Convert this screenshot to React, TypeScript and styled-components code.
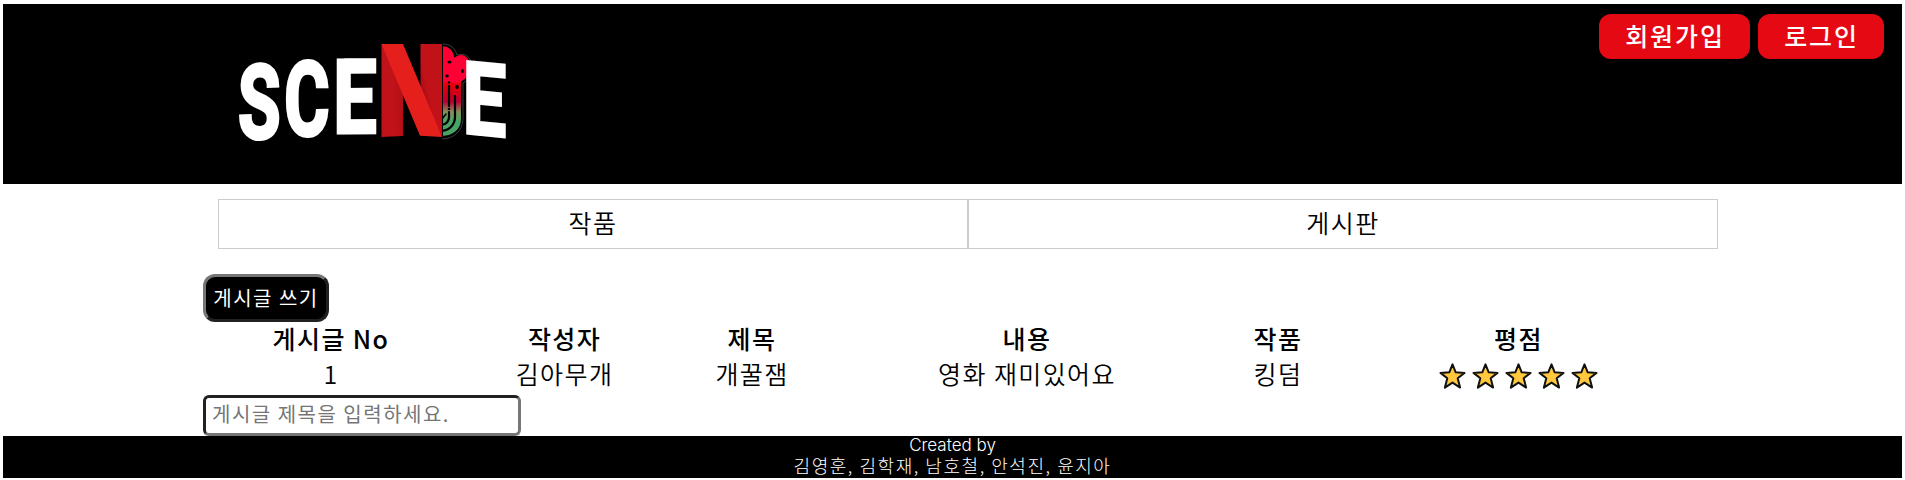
import React from "react";
import styled, { createGlobalStyle } from "styled-components";

const GlobalStyle = createGlobalStyle`
  * { box-sizing: border-box; }
  body {
    margin: 0;
    background: #fff;
    color: #000;
    font-family: "Noto Sans CJK KR", sans-serif;
  }
`;

const Page = styled.div`
  padding: 4px 3px 2px;
  height: 480px;
  display: flex;
  flex-direction: column;
`;

const Header = styled.header`
  height: 180px;
  flex: none;
  background: #000;
  display: flex;
  justify-content: space-between;
  align-items: flex-start;
  padding: 10px 18px 0 227px;
`;

const Logo = styled.svg`
  display: block;
  overflow: visible;
`;

const AuthButtons = styled.div`
  display: flex;
  gap: 8px;
`;

const AuthButton = styled.button<{ $width: number }>`
  width: ${(p) => p.$width}px;
  height: 45px;
  padding: 0 0 2px 1px;
  border: 0;
  border-radius: 12px;
  background: #e50914;
  color: #fff;
  font: 500 25px/1 "Noto Sans CJK KR", sans-serif;
  letter-spacing: 1.9px;
`;

const Nav = styled.nav`
  display: flex;
  flex: none;
  width: 1500px;
  height: 50px;
  margin: 15px 0 0 215px;
`;

const NavItem = styled.a`
  flex: 1;
  display: flex;
  align-items: center;
  justify-content: center;
  border: 1px solid #ccc;
  padding-bottom: 3px;
  font-size: 25px;
  font-weight: 350;
  line-height: 1;
  letter-spacing: 1.5px;
`;

const Board = styled.main`
  width: 1500px;
  height: 187px;
  flex: none;
  padding-top: 25px;
  margin-left: 200px;
  display: flex;
  flex-direction: column;
  align-items: flex-start;
`;

const WriteButton = styled.button`
  width: 126px;
  height: 48px;
  flex: none;
  padding: 0;
  border: 3px outset #767676;
  border-radius: 12px;
  background: #000;
  color: #fff;
  font: 400 20px/1 "Noto Sans CJK KR", sans-serif;
  letter-spacing: 1.5px;
  white-space: nowrap;
`;

const Posts = styled.div`
  display: flex;
  flex-direction: column;
`;

const Row = styled.div<{ $head?: boolean }>`
  display: grid;
  grid-template-columns: 256px 211px 164px 386px 116px 365px;
  height: ${(p) => (p.$head ? 35 : 38)}px;
  line-height: ${(p) => (p.$head ? 33 : 32)}px;
  font-size: 25px;
  font-weight: ${(p) => (p.$head ? 500 : 350)};
  letter-spacing: 1.4px;
  text-align: center;
`;

const Stars = styled.div`
  display: flex;
  justify-content: center;
  gap: 6px;
  padding-top: 6px;
`;

const SearchInput = styled.input`
  width: 318px;
  height: 41px;
  flex: none;
  padding: 0 6px 4px;
  border: 3px inset #767676;
  border-radius: 6px;
  background: #fff;
  font: 400 20px/1 "Noto Sans CJK KR", sans-serif;
  letter-spacing: 1.5px;
  &::placeholder { color: #757575; }
`;

const Footer = styled.footer`
  height: 42px;
  flex: none;
  background: #000;
  color: #fff;
  text-align: center;
  font-weight: 300;
  font-size: 18px;
  line-height: 23px;
  letter-spacing: 1.55px;
`;

const Latin = styled.div`
  font-family: Inter, sans-serif;
  font-size: 17px;
  line-height: 18px;
  letter-spacing: 0;
`;

const LETTER = {
  fontFamily: "Roboto, sans-serif",
  fontWeight: 700,
  fontSize: 100,
  fill: "#fff",
  stroke: "#fff",
  strokeWidth: 3.5,
};

function SceneLogo() {
  return (
    <Logo width="290" height="160" viewBox="230 14 290 160" role="img" aria-label="SCENE">
      <defs>
        <linearGradient id="vine" x1="0" y1="45" x2="0" y2="138" gradientUnits="userSpaceOnUse">
          <stop offset="0.4" stopColor="#ff0034" />
          <stop offset="0.41" stopColor="#e8000c" />
          <stop offset="0.52" stopColor="#d00018" />
          <stop offset="0.61" stopColor="#b80034" />
          <stop offset="0.72" stopColor="#83905a" />
          <stop offset="0.82" stopColor="#48a365" />
        </linearGradient>
        <linearGradient id="fold" x1="0" y1="0.55" x2="1" y2="0.45">
          <stop offset="0.55" stopColor="#c11119" />
          <stop offset="1" stopColor="#b30f16" />
        </linearGradient>
        <linearGradient id="foldRight" x1="0" y1="1" x2="0.6" y2="0.4">
          <stop offset="0.3" stopColor="#930a10" />
          <stop offset="0.7" stopColor="#c11119" />
        </linearGradient>
      </defs>
      <text {...LETTER} transform="matrix(.69 -.03 0 1.03 238 139.3)">S</text>
      <text {...LETTER} transform="matrix(.69 -.01 0 1.03 284.3 135.5)">C</text>
      <text {...LETTER} transform="matrix(.77 -.005 0 1.02 333.3 132.8)">E</text>

      <path d="M442 45c7 0 12 5 13 11 8-5 16 1 16 10 0 8-4 14-9 16v37c0 11-9 18-20 18z" fill="url(#vine)" stroke="#000" strokeWidth="2" />
      <path d="M443 44c7 0 12 4 14 11 8-3 15 3 15 11 0 8-4 14-9 17v36c0 11-9 20-21 20" fill="none" stroke="#777" strokeWidth=".5" />
      <g fill="none" stroke="#000" strokeWidth="2.2" strokeLinecap="round">
        <path d="M455 96v21c0 7-5 13-13 14" />
        <path d="M449 86v20m0 6v5c0 4-3 7-7 8" />
        <path d="M442 119l4-5" strokeWidth="1.6" />
      </g>
      <g fill="#000">
        <ellipse cx="449.5" cy="62" rx="2" ry="1.5" />
        <ellipse cx="462.5" cy="71" rx="1.4" ry="2" />
        <ellipse cx="447" cy="76" rx="1.8" ry="1.4" />
        <ellipse cx="457" cy="87" rx="1.8" ry="2" />
        <circle cx="449" cy="82.5" r="1.2" />
        <circle cx="449" cy="109" r="1.3" />
      </g>
      <path d="M381.5 44h21.5v92l-21.5 1z" fill="url(#fold)" />
      <path d="M420.5 44H442v93l-21.5-42z" fill="url(#foldRight)" />
      <path d="M381.5 44H403l39 93-22-1.3z" fill="#e5201c" />
      <text {...LETTER} transform="matrix(.77 .075 0 1 462.8 132.5)">E</text>
    </Logo>
  );
}

function Star() {
  return (
    <svg width="27" height="26" viewBox="0 0 27 26" aria-hidden="true">
      <path
        d="M13.5 1.4l3.2 7.9 8.8.6-6.8 5.4 2.4 9.3-7.6-5-7.6 5 2.4-9.3L1.5 9.9l8.8-.6z"
        fill="#ffc83d"
        stroke="#111"
        strokeWidth="2"
        strokeLinejoin="round"
      />
    </svg>
  );
}

const COLUMNS = ["게시글 No", "작성자", "제목", "내용", "작품", "평점"];
const POSTS = [
  { no: 1, writer: "김아무개", title: "개꿀잼", content: "영화 재미있어요", work: "킹덤", rating: 5 },
];

export default function App() {
  return (
    <>
      <GlobalStyle />
      <Page>
        <Header>
          <SceneLogo />
          <AuthButtons>
            <AuthButton $width={151}>회원가입</AuthButton>
            <AuthButton $width={126}>로그인</AuthButton>
          </AuthButtons>
        </Header>
        <Nav>
          <NavItem>작품</NavItem>
          <NavItem>게시판</NavItem>
        </Nav>
        <Board>
          <WriteButton>게시글 쓰기</WriteButton>
          <Posts>
            <Row $head>
              {COLUMNS.map((c) => (
                <div key={c}>{c}</div>
              ))}
            </Row>
            {POSTS.map((p) => (
              <Row key={p.no}>
                <div>{p.no}</div>
                <div>{p.writer}</div>
                <div>{p.title}</div>
                <div>{p.content}</div>
                <div>{p.work}</div>
                <Stars>
                  {Array.from({ length: p.rating }, (_, i) => (
                    <Star key={i} />
                  ))}
                </Stars>
              </Row>
            ))}
          </Posts>
          <SearchInput placeholder="게시글 제목을 입력하세요." />
        </Board>
        <Footer>
          <Latin>Created by</Latin>
          <div>김영훈, 김학재, 남호철, 안석진, 윤지아</div>
        </Footer>
      </Page>
    </>
  );
}
